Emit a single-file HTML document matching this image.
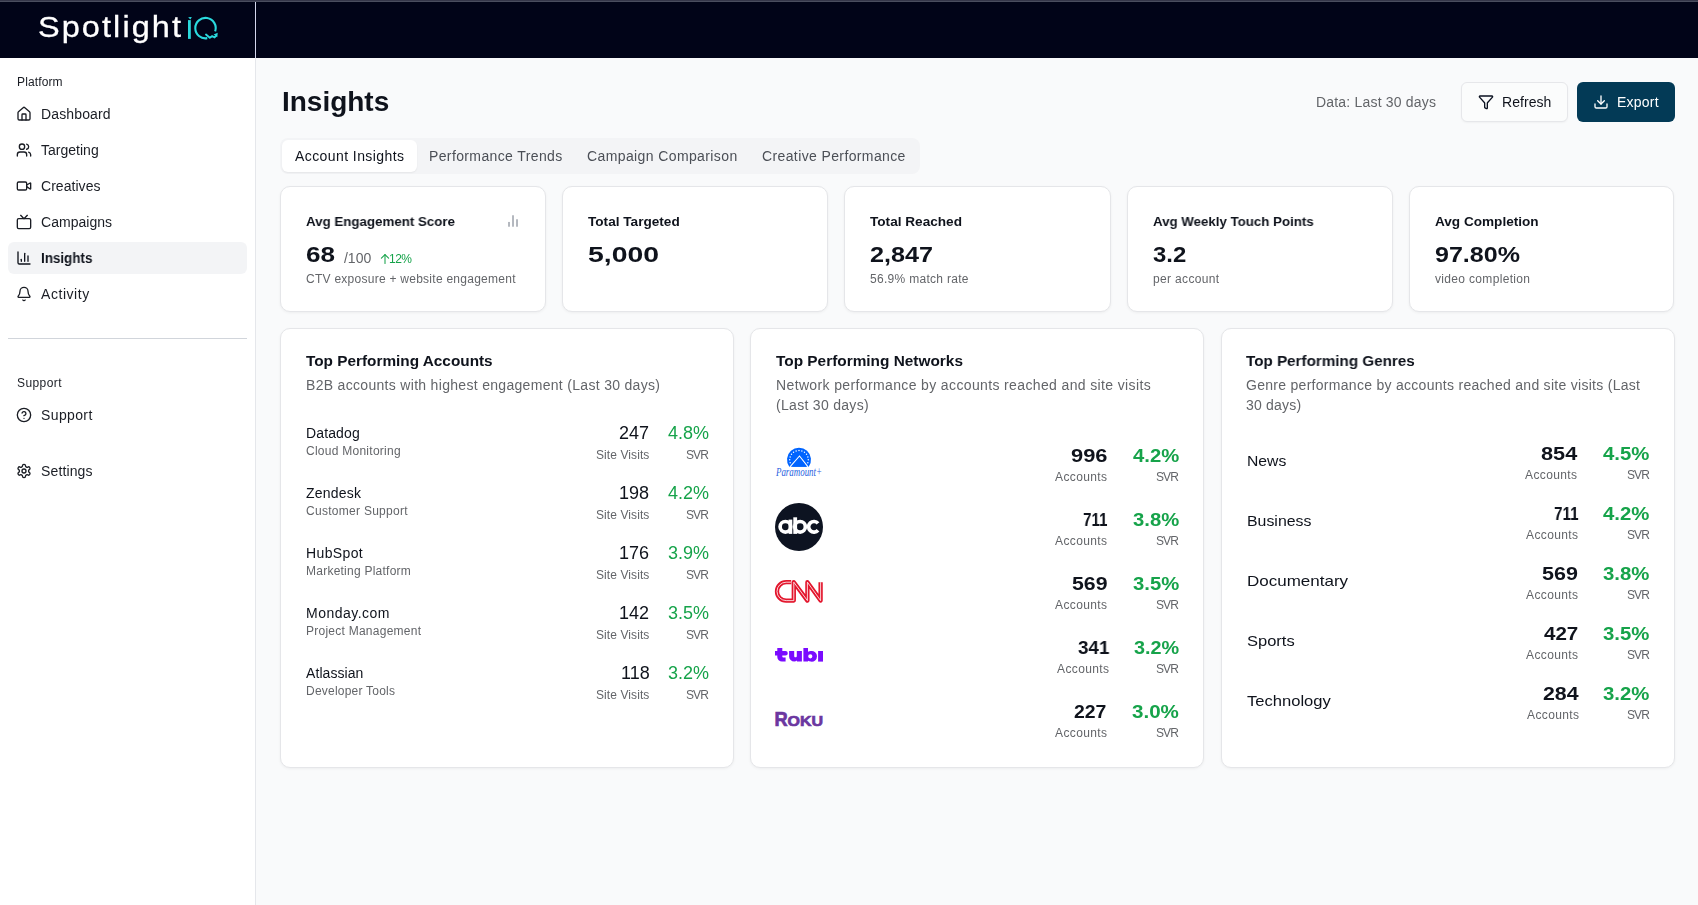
<!DOCTYPE html>
<html><head><meta charset="utf-8">
<style>
*{box-sizing:border-box;margin:0;padding:0}
html,body{width:1698px;height:905px;overflow:hidden;background:#f9fafb;font-family:"Liberation Sans",sans-serif;color:#111827;position:relative}
.t{position:absolute;white-space:nowrap;will-change:transform}
.b{position:absolute}
svg{position:absolute;overflow:visible}
</style></head>
<body>
<div class="b" style="left:0px;top:0px;width:1698px;height:1px;background:#35374a"></div>
<div class="b" style="left:0px;top:1px;width:1698px;height:1px;background:#4a4e5f"></div>
<div class="b" style="left:0px;top:2px;width:1698px;height:56px;background:#010418"></div>
<div class="b" style="left:255px;top:2px;width:1px;height:56px;background:#d3d6ec"></div>
<div class="b" style="left:0px;top:58px;width:255px;height:847px;background:#fff"></div>
<div class="b" style="left:255px;top:58px;width:1px;height:847px;background:#e5e7eb"></div>
<div class="t" style="left:37.50px;top:12.43px;font-size:29.5px;line-height:29.5px;color:#ffffff;letter-spacing:1.900px;-webkit-text-stroke:0.3px #fff;transform:scaleX(1.1);transform-origin:0 0;">Spotlight</div>
<svg style="left:186px;top:15px" width="36" height="28" viewBox="0 0 36 28">
<path d="M5.8 1.9 L2.1 2.3 L4.4 4.5 Z" fill="#2ad9dd"/>
<rect x="2.0" y="5.1" width="2.8" height="18.8" fill="#2ad9dd"/>
<path d="M 21.27 23.15 A 10.2 10.2 0 1 1 29.14 16.42" fill="none" stroke="#2ad9dd" stroke-width="2.1"/>
<path d="M 20.0 19.6 L 23.8 22.8 L 26.2 21.1 L 28.6 22.5 L 30.2 20.6" fill="none" stroke="#2ad9dd" stroke-width="1.9" stroke-linejoin="round" stroke-linecap="round"/>
<path d="M 31.7 17.8 L 27.6 19.5 L 31.3 22.2 Z" fill="#2ad9dd"/>
</svg>
<div class="t" style="left:16.60px;top:75.74px;font-size:12px;line-height:12px;color:#1a1d24;letter-spacing:0.131px;">Platform</div>
<div class="b" style="left:8px;top:242px;width:239px;height:32px;background:#f3f4f6;border-radius:6px"></div>
<div class="t" style="left:40.60px;top:107.35px;font-size:14px;line-height:14px;color:#1a1d24;letter-spacing:0.139px;">Dashboard</div>
<svg style="left:16px;top:106px" width="16" height="16" viewBox="0 0 24 24" fill="none" stroke="#1a1d24" stroke-width="2" stroke-linecap="round" stroke-linejoin="round"><path d="M15 21v-8a1 1 0 0 0-1-1h-4a1 1 0 0 0-1 1v8"/><path d="M3 10a2 2 0 0 1 .709-1.528l7-5.999a2 2 0 0 1 2.582 0l7 5.999A2 2 0 0 1 21 10v9a2 2 0 0 1-2 2H5a2 2 0 0 1-2-2z"/></svg>
<div class="t" style="left:40.60px;top:143.35px;font-size:14px;line-height:14px;color:#1a1d24;letter-spacing:0.013px;">Targeting</div>
<svg style="left:16px;top:142px" width="16" height="16" viewBox="0 0 24 24" fill="none" stroke="#1a1d24" stroke-width="2" stroke-linecap="round" stroke-linejoin="round"><path d="M16 21v-2a4 4 0 0 0-4-4H6a4 4 0 0 0-4 4v2"/><circle cx="9" cy="7" r="4"/><path d="M22 21v-2a4 4 0 0 0-3-3.87"/><path d="M16 3.13a4 4 0 0 1 0 7.75"/></svg>
<div class="t" style="left:40.60px;top:179.35px;font-size:14px;line-height:14px;color:#1a1d24;letter-spacing:0.046px;">Creatives</div>
<svg style="left:16px;top:178px" width="16" height="16" viewBox="0 0 24 24" fill="none" stroke="#1a1d24" stroke-width="2" stroke-linecap="round" stroke-linejoin="round"><path d="m16 13 5.223 3.482a.5.5 0 0 0 .777-.416V7.87a.5.5 0 0 0-.752-.432L16 10.5"/><rect x="2" y="6" width="14" height="12" rx="2"/></svg>
<div class="t" style="left:40.60px;top:215.35px;font-size:14px;line-height:14px;color:#1a1d24;letter-spacing:0.036px;">Campaigns</div>
<svg style="left:16px;top:214px" width="16" height="16" viewBox="0 0 24 24" fill="none" stroke="#1a1d24" stroke-width="2" stroke-linecap="round" stroke-linejoin="round"><rect width="20" height="15" x="2" y="7" rx="2" ry="2"/><polyline points="17 2 12 7 7 2"/></svg>
<div class="t" style="left:40.60px;top:251.35px;font-size:14px;line-height:14px;color:#0f131c;font-weight:bold;transform:scaleX(0.9559);transform-origin:0 0;">Insights</div>
<svg style="left:16px;top:250px" width="16" height="16" viewBox="0 0 24 24" fill="none" stroke="#0f131c" stroke-width="2" stroke-linecap="round" stroke-linejoin="round"><path d="M3 3v16a2 2 0 0 0 2 2h16"/><path d="M18 17V9"/><path d="M13 17V5"/><path d="M8 17v-3"/></svg>
<div class="t" style="left:40.60px;top:287.35px;font-size:14px;line-height:14px;color:#1a1d24;letter-spacing:0.552px;">Activity</div>
<svg style="left:16px;top:286px" width="16" height="16" viewBox="0 0 24 24" fill="none" stroke="#1a1d24" stroke-width="2" stroke-linecap="round" stroke-linejoin="round"><path d="M10.268 21a2 2 0 0 0 3.464 0"/><path d="M3.262 15.326A1 1 0 0 0 4 17h16a1 1 0 0 0 .74-1.673C19.41 13.956 18 12.499 18 8A6 6 0 0 0 6 8c0 4.499-1.411 5.956-2.738 7.326"/></svg>
<div class="b" style="left:8px;top:338px;width:239px;height:1px;background:#d1d5db"></div>
<div class="t" style="left:16.60px;top:376.84px;font-size:12px;line-height:12px;color:#1a1d24;letter-spacing:0.412px;">Support</div>
<div class="t" style="left:40.60px;top:407.75px;font-size:14px;line-height:14px;color:#1a1d24;letter-spacing:0.378px;">Support</div>
<svg style="left:16px;top:407px" width="16" height="16" viewBox="0 0 24 24" fill="none" stroke="#1a1d24" stroke-width="2" stroke-linecap="round" stroke-linejoin="round"><circle cx="12" cy="12" r="10"/><path d="M9.09 9a3 3 0 0 1 5.83 1c0 2-3 3-3 3"/><path d="M12 17h.01"/></svg>
<div class="t" style="left:40.60px;top:463.85px;font-size:14px;line-height:14px;color:#1a1d24;letter-spacing:0.131px;">Settings</div>
<svg style="left:16px;top:463px" width="16" height="16" viewBox="0 0 24 24" fill="none" stroke="#1a1d24" stroke-width="2" stroke-linecap="round" stroke-linejoin="round"><path d="M12.22 2h-.44a2 2 0 0 0-2 2v.18a2 2 0 0 1-1 1.73l-.43.25a2 2 0 0 1-2 0l-.15-.08a2 2 0 0 0-2.73.73l-.22.38a2 2 0 0 0 .73 2.73l.15.1a2 2 0 0 1 1 1.72v.51a2 2 0 0 1-1 1.74l-.15.09a2 2 0 0 0-.73 2.73l.22.38a2 2 0 0 0 2.73.73l.15-.08a2 2 0 0 1 2 0l.43.25a2 2 0 0 1 1 1.73V20a2 2 0 0 0 2 2h.44a2 2 0 0 0 2-2v-.18a2 2 0 0 1 1-1.73l.43-.25a2 2 0 0 1 2 0l.15.08a2 2 0 0 0 2.73-.73l.22-.39a2 2 0 0 0-.73-2.73l-.15-.08a2 2 0 0 1-1-1.74v-.5a2 2 0 0 1 1-1.74l.15-.09a2 2 0 0 0 .73-2.73l-.22-.38a2 2 0 0 0-2.73-.73l-.15.08a2 2 0 0 1-2 0l-.43-.25a2 2 0 0 1-1-1.73V4a2 2 0 0 0-2-2z"/><circle cx="12" cy="12" r="3"/></svg>
<div class="t" style="left:281.80px;top:88.30px;font-size:28px;line-height:28px;color:#0f131c;font-weight:bold;letter-spacing:-0.020px;">Insights</div>
<div class="t" style="left:1316.00px;top:95.25px;font-size:14px;line-height:14px;color:#636569;letter-spacing:0.192px;">Data: Last 30 days</div>
<div class="b" style="left:1461px;top:82px;width:107px;height:40px;background:#fbfcfc;border:1px solid #e6e7ea;border-radius:6px;box-shadow:0 1px 2px rgba(0,0,0,0.04)"></div>
<svg style="left:1478px;top:94px" width="16" height="16" viewBox="0 0 24 24" fill="none" stroke="#0b1120" stroke-width="2" stroke-linecap="round" stroke-linejoin="round"><path d="M10 20a1 1 0 0 0 .553.895l2 1A1 1 0 0 0 14 21v-7a2 2 0 0 1 .517-1.341L21.74 4.67A1 1 0 0 0 21 3H3a1 1 0 0 0-.742 1.67l7.225 7.989A2 2 0 0 1 10 14z"/></svg>
<div class="t" style="left:1502.00px;top:95.25px;font-size:14px;line-height:14px;color:#0f131c;letter-spacing:0.047px;">Refresh</div>
<div class="b" style="left:1577px;top:82px;width:98px;height:40px;background:#033a56;border-radius:6px"></div>
<svg style="left:1593px;top:94px" width="16" height="16" viewBox="0 0 24 24" fill="none" stroke="#ffffff" stroke-width="2" stroke-linecap="round" stroke-linejoin="round"><path d="M12 15V3"/><path d="M21 15v4a2 2 0 0 1-2 2H5a2 2 0 0 1-2-2v-4"/><path d="m7 10 5 5 5-5"/></svg>
<div class="t" style="left:1617.00px;top:95.25px;font-size:14px;line-height:14px;color:#ffffff;letter-spacing:0.228px;">Export</div>
<div class="b" style="left:280px;top:138px;width:640px;height:36px;background:#f3f4f6;border-radius:8px"></div>
<div class="b" style="left:282px;top:140px;width:135px;height:32px;background:#fff;border-radius:6px;box-shadow:0 1px 2px rgba(0,0,0,0.06)"></div>
<div class="t" style="left:294.70px;top:149.15px;font-size:14px;line-height:14px;color:#0f131c;letter-spacing:0.419px;">Account Insights</div>
<div class="t" style="left:429.00px;top:149.15px;font-size:14px;line-height:14px;color:#4b4f56;letter-spacing:0.375px;">Performance Trends</div>
<div class="t" style="left:587.20px;top:149.15px;font-size:14px;line-height:14px;color:#4b4f56;letter-spacing:0.390px;">Campaign Comparison</div>
<div class="t" style="left:762.40px;top:149.15px;font-size:14px;line-height:14px;color:#4b4f56;letter-spacing:0.381px;">Creative Performance</div>
<div class="b" style="left:280px;top:186px;width:266px;height:125.5px;background:#fff;border:1px solid #e5e6e9;border-radius:10px;box-shadow:0 1px 3px rgba(0,0,0,0.05)"></div>
<div class="t" style="left:305.60px;top:214.67px;font-size:13.5px;line-height:13.5px;color:#0f131c;font-weight:bold;transform:scaleX(0.9865);transform-origin:0 0;">Avg Engagement Score</div>
<div class="t" style="left:305.60px;top:243.68px;font-size:22px;line-height:22px;color:#0f131c;font-weight:bold;transform:scaleX(1.1850);transform-origin:0 0;">68</div>
<div class="t" style="left:305.60px;top:272.94px;font-size:12px;line-height:12px;color:#636569;letter-spacing:0.262px;">CTV exposure + website engagement</div>
<div class="b" style="left:562px;top:186px;width:266px;height:125.5px;background:#fff;border:1px solid #e5e6e9;border-radius:10px;box-shadow:0 1px 3px rgba(0,0,0,0.05)"></div>
<div class="t" style="left:587.60px;top:214.67px;font-size:13.5px;line-height:13.5px;color:#0f131c;font-weight:bold;transform:scaleX(1.0076);transform-origin:0 0;">Total Targeted</div>
<div class="t" style="left:587.60px;top:243.68px;font-size:22px;line-height:22px;color:#0f131c;font-weight:bold;transform:scaleX(1.2896);transform-origin:0 0;">5,000</div>
<div class="b" style="left:844px;top:186px;width:267px;height:125.5px;background:#fff;border:1px solid #e5e6e9;border-radius:10px;box-shadow:0 1px 3px rgba(0,0,0,0.05)"></div>
<div class="t" style="left:869.60px;top:214.67px;font-size:13.5px;line-height:13.5px;color:#0f131c;font-weight:bold;transform:scaleX(1.0080);transform-origin:0 0;">Total Reached</div>
<div class="t" style="left:869.60px;top:243.68px;font-size:22px;line-height:22px;color:#0f131c;font-weight:bold;transform:scaleX(1.1443);transform-origin:0 0;">2,847</div>
<div class="t" style="left:869.60px;top:272.94px;font-size:12px;line-height:12px;color:#636569;letter-spacing:0.297px;">56.9% match rate</div>
<div class="b" style="left:1127px;top:186px;width:266px;height:125.5px;background:#fff;border:1px solid #e5e6e9;border-radius:10px;box-shadow:0 1px 3px rgba(0,0,0,0.05)"></div>
<div class="t" style="left:1152.60px;top:214.67px;font-size:13.5px;line-height:13.5px;color:#0f131c;font-weight:bold;transform:scaleX(0.9842);transform-origin:0 0;">Avg Weekly Touch Points</div>
<div class="t" style="left:1152.60px;top:243.68px;font-size:22px;line-height:22px;color:#0f131c;font-weight:bold;transform:scaleX(1.0855);transform-origin:0 0;">3.2</div>
<div class="t" style="left:1152.60px;top:272.94px;font-size:12px;line-height:12px;color:#636569;letter-spacing:0.349px;">per account</div>
<div class="b" style="left:1409px;top:186px;width:265px;height:125.5px;background:#fff;border:1px solid #e5e6e9;border-radius:10px;box-shadow:0 1px 3px rgba(0,0,0,0.05)"></div>
<div class="t" style="left:1434.60px;top:214.67px;font-size:13.5px;line-height:13.5px;color:#0f131c;font-weight:bold;transform:scaleX(1.0059);transform-origin:0 0;">Avg Completion</div>
<div class="t" style="left:1434.60px;top:243.68px;font-size:22px;line-height:22px;color:#0f131c;font-weight:bold;transform:scaleX(1.1391);transform-origin:0 0;">97.80%</div>
<div class="t" style="left:1434.60px;top:272.94px;font-size:12px;line-height:12px;color:#636569;letter-spacing:0.330px;">video completion</div>
<div class="t" style="left:343.50px;top:250.65px;font-size:14px;line-height:14px;color:#636569;letter-spacing:-0.016px;">/100</div>
<svg style="left:379.5px;top:252.6px" width="10" height="12" viewBox="0 0 10 12" fill="none" stroke="#16a34a" stroke-width="1.05" stroke-linecap="round" stroke-linejoin="round"><path d="M5 10.5V1.6"/><path d="M1.4 5.2 L5 1.6 L8.6 5.2"/></svg>
<div class="t" style="left:389.00px;top:252.84px;font-size:12px;line-height:12px;color:#16a34a;letter-spacing:-0.509px;">12%</div>
<svg style="left:505px;top:213px" width="16" height="16" viewBox="0 0 24 24" fill="none" stroke="#6b7280" stroke-width="1.5" stroke-linecap="round" stroke-linejoin="round"><path d="M18 20V10"/><path d="M12 20V4"/><path d="M6 20v-6"/></svg>
<div class="b" style="left:280px;top:328px;width:454.1px;height:440px;background:#fff;border:1px solid #e5e6e9;border-radius:10px;box-shadow:0 1px 3px rgba(0,0,0,0.05)"></div>
<div class="b" style="left:750.4px;top:328px;width:454.1px;height:440px;background:#fff;border:1px solid #e5e6e9;border-radius:10px;box-shadow:0 1px 3px rgba(0,0,0,0.05)"></div>
<div class="b" style="left:1220.8px;top:328px;width:454.1px;height:440px;background:#fff;border:1px solid #e5e6e9;border-radius:10px;box-shadow:0 1px 3px rgba(0,0,0,0.05)"></div>
<div class="t" style="left:305.60px;top:352.95px;font-size:15.3px;line-height:15.3px;color:#0f131c;font-weight:bold;transform:scaleX(1.0029);transform-origin:0 0;">Top Performing Accounts</div>
<div class="t" style="left:305.60px;top:378.15px;font-size:14px;line-height:14px;color:#636569;letter-spacing:0.309px;">B2B accounts with highest engagement (Last 30 days)</div>
<div class="t" style="left:776.00px;top:352.95px;font-size:15.3px;line-height:15.3px;color:#0f131c;font-weight:bold;transform:scaleX(1.0060);transform-origin:0 0;">Top Performing Networks</div>
<div class="t" style="left:776.00px;top:378.15px;font-size:14px;line-height:14px;color:#636569;letter-spacing:0.368px;">Network performance by accounts reached and site visits</div>
<div class="t" style="left:776.00px;top:398.15px;font-size:14px;line-height:14px;color:#636569;letter-spacing:0.299px;">(Last 30 days)</div>
<div class="t" style="left:1246.40px;top:352.95px;font-size:15.3px;line-height:15.3px;color:#0f131c;font-weight:bold;transform:scaleX(0.9939);transform-origin:0 0;">Top Performing Genres</div>
<div class="t" style="left:1246.40px;top:378.15px;font-size:14px;line-height:14px;color:#636569;letter-spacing:0.286px;">Genre performance by accounts reached and site visits (Last</div>
<div class="t" style="left:1246.40px;top:398.15px;font-size:14px;line-height:14px;color:#636569;letter-spacing:0.215px;">30 days)</div>
<div class="t" style="left:305.60px;top:426.15px;font-size:14px;line-height:14px;color:#0f131c;letter-spacing:0.128px;">Datadog</div>
<div class="t" style="left:305.60px;top:444.64px;font-size:12px;line-height:12px;color:#636569;letter-spacing:0.259px;">Cloud Monitoring</div>
<div class="t" style="left:619.47px;top:423.76px;font-size:18px;line-height:18px;color:#0f131c;">247</div>
<div class="t" style="left:667.77px;top:423.76px;font-size:18px;line-height:18px;color:#16a34a;">4.8%</div>
<div class="t" style="left:596.20px;top:448.64px;font-size:12px;line-height:12px;color:#636569;letter-spacing:0.083px;">Site Visits</div>
<div class="t" style="left:686.00px;top:448.64px;font-size:12px;line-height:12px;color:#636569;letter-spacing:-0.938px;">SVR</div>
<div class="t" style="left:305.60px;top:486.15px;font-size:14px;line-height:14px;color:#0f131c;letter-spacing:0.217px;">Zendesk</div>
<div class="t" style="left:305.60px;top:504.64px;font-size:12px;line-height:12px;color:#636569;letter-spacing:0.281px;">Customer Support</div>
<div class="t" style="left:619.47px;top:483.76px;font-size:18px;line-height:18px;color:#0f131c;">198</div>
<div class="t" style="left:667.77px;top:483.76px;font-size:18px;line-height:18px;color:#16a34a;">4.2%</div>
<div class="t" style="left:596.20px;top:508.64px;font-size:12px;line-height:12px;color:#636569;letter-spacing:0.083px;">Site Visits</div>
<div class="t" style="left:686.00px;top:508.64px;font-size:12px;line-height:12px;color:#636569;letter-spacing:-0.938px;">SVR</div>
<div class="t" style="left:305.60px;top:546.15px;font-size:14px;line-height:14px;color:#0f131c;letter-spacing:0.370px;">HubSpot</div>
<div class="t" style="left:305.60px;top:564.64px;font-size:12px;line-height:12px;color:#636569;letter-spacing:0.241px;">Marketing Platform</div>
<div class="t" style="left:619.47px;top:543.76px;font-size:18px;line-height:18px;color:#0f131c;">176</div>
<div class="t" style="left:667.77px;top:543.76px;font-size:18px;line-height:18px;color:#16a34a;">3.9%</div>
<div class="t" style="left:596.20px;top:568.64px;font-size:12px;line-height:12px;color:#636569;letter-spacing:0.083px;">Site Visits</div>
<div class="t" style="left:686.00px;top:568.64px;font-size:12px;line-height:12px;color:#636569;letter-spacing:-0.938px;">SVR</div>
<div class="t" style="left:305.60px;top:606.15px;font-size:14px;line-height:14px;color:#0f131c;letter-spacing:0.477px;">Monday.com</div>
<div class="t" style="left:305.60px;top:624.64px;font-size:12px;line-height:12px;color:#636569;letter-spacing:0.251px;">Project Management</div>
<div class="t" style="left:619.47px;top:603.76px;font-size:18px;line-height:18px;color:#0f131c;">142</div>
<div class="t" style="left:667.77px;top:603.76px;font-size:18px;line-height:18px;color:#16a34a;">3.5%</div>
<div class="t" style="left:596.20px;top:628.64px;font-size:12px;line-height:12px;color:#636569;letter-spacing:0.083px;">Site Visits</div>
<div class="t" style="left:686.00px;top:628.64px;font-size:12px;line-height:12px;color:#636569;letter-spacing:-0.938px;">SVR</div>
<div class="t" style="left:305.60px;top:666.15px;font-size:14px;line-height:14px;color:#0f131c;letter-spacing:0.074px;">Atlassian</div>
<div class="t" style="left:305.60px;top:684.64px;font-size:12px;line-height:12px;color:#636569;letter-spacing:0.227px;">Developer Tools</div>
<div class="t" style="left:620.80px;top:663.76px;font-size:18px;line-height:18px;color:#0f131c;">118</div>
<div class="t" style="left:667.77px;top:663.76px;font-size:18px;line-height:18px;color:#16a34a;">3.2%</div>
<div class="t" style="left:596.20px;top:688.64px;font-size:12px;line-height:12px;color:#636569;letter-spacing:0.083px;">Site Visits</div>
<div class="t" style="left:686.00px;top:688.64px;font-size:12px;line-height:12px;color:#636569;letter-spacing:-0.938px;">SVR</div>
<div class="t" style="left:1070.90px;top:445.92px;font-size:19px;line-height:19px;color:#0f131c;font-weight:bold;transform:scaleX(1.1514);transform-origin:0 0;">996</div>
<div class="t" style="left:1132.80px;top:445.92px;font-size:19px;line-height:19px;color:#16a34a;font-weight:bold;transform:scaleX(1.0668);transform-origin:0 0;">4.2%</div>
<div class="t" style="left:1055.40px;top:470.54px;font-size:12px;line-height:12px;color:#636569;letter-spacing:0.377px;">Accounts</div>
<div class="t" style="left:1156.20px;top:470.54px;font-size:12px;line-height:12px;color:#636569;letter-spacing:-0.938px;">SVR</div>
<svg style="left:775px;top:448px" width="48" height="30" viewBox="0 0 48 30">
<path d="M 2.30 18.8 A 12 12 0 1 1 45.70 18.8 Z" fill="none"/>
<path d="M 2.3 18.8 A 12 12 0 1 1 21.7 18.8 Z" transform="translate(12,0)" fill="#0064ff"/>
<g transform="translate(12,0)"><circle cx="3.16" cy="14.67" r="0.72" fill="#fff"/><circle cx="2.70" cy="11.80" r="0.72" fill="#fff"/><circle cx="3.16" cy="8.93" r="0.72" fill="#fff"/><circle cx="4.48" cy="6.33" r="0.72" fill="#fff"/><circle cx="6.53" cy="4.28" r="0.72" fill="#fff"/><circle cx="9.13" cy="2.96" r="0.72" fill="#fff"/><circle cx="12.00" cy="2.50" r="0.72" fill="#fff"/><circle cx="14.87" cy="2.96" r="0.72" fill="#fff"/><circle cx="17.47" cy="4.28" r="0.72" fill="#fff"/><circle cx="19.52" cy="6.33" r="0.72" fill="#fff"/><circle cx="20.84" cy="8.93" r="0.72" fill="#fff"/><circle cx="21.30" cy="11.80" r="0.72" fill="#fff"/><circle cx="20.84" cy="14.67" r="0.72" fill="#fff"/>
<path d="M 3 18.8 L 12.5 8 L 21 18.8" fill="none" stroke="#fff" stroke-width="1.1"/>
<path d="M 12.5 9.8 L 19.5 18.8 L 5 18.8 Z" fill="#0064ff"/>
</g>
<text x="24" y="28.2" text-anchor="middle" font-family="Liberation Serif" font-style="italic" font-size="11.5" fill="#1f5fe0" textLength="46" lengthAdjust="spacingAndGlyphs">Paramount+</text>
</svg>
<div class="t" style="left:1082.80px;top:509.92px;font-size:19px;line-height:19px;color:#0f131c;font-weight:bold;transform:scaleX(0.8025);transform-origin:0 0;">711</div>
<div class="t" style="left:1132.80px;top:509.92px;font-size:19px;line-height:19px;color:#16a34a;font-weight:bold;transform:scaleX(1.0668);transform-origin:0 0;">3.8%</div>
<div class="t" style="left:1055.40px;top:534.54px;font-size:12px;line-height:12px;color:#636569;letter-spacing:0.377px;">Accounts</div>
<div class="t" style="left:1156.20px;top:534.54px;font-size:12px;line-height:12px;color:#636569;letter-spacing:-0.938px;">SVR</div>
<svg style="left:775px;top:503px" width="48" height="48" viewBox="0 0 48 48">
<circle cx="24" cy="24" r="24" fill="#0d1321"/>
<g fill="none" stroke="#fff" stroke-width="3.7">
<circle cx="10.4" cy="23.8" r="5.3"/>
<circle cx="25.1" cy="23.8" r="5.3"/>
<path d="M 43 20.4 A 5.3 5.3 0 1 0 43 27.2"/>
</g>
<rect x="13.6" y="16.6" width="3.7" height="14.3" fill="#fff"/>
<rect x="18.3" y="14.3" width="3.8" height="16.6" fill="#fff"/>
</svg>
<div class="t" style="left:1071.90px;top:573.92px;font-size:19px;line-height:19px;color:#0f131c;font-weight:bold;transform:scaleX(1.1198);transform-origin:0 0;">569</div>
<div class="t" style="left:1132.80px;top:573.92px;font-size:19px;line-height:19px;color:#16a34a;font-weight:bold;transform:scaleX(1.0668);transform-origin:0 0;">3.5%</div>
<div class="t" style="left:1055.40px;top:598.54px;font-size:12px;line-height:12px;color:#636569;letter-spacing:0.377px;">Accounts</div>
<div class="t" style="left:1156.20px;top:598.54px;font-size:12px;line-height:12px;color:#636569;letter-spacing:-0.938px;">SVR</div>
<svg style="left:775px;top:580px" width="48" height="23" viewBox="0 0 48 23">
<g fill="none" stroke-linejoin="round" stroke-linecap="butt">
<path d="M 16.2 2.2 H 11.2 A 9.2 9.2 0 0 0 11.2 20.6 H 18.8 V 2.2 L 32.4 20.6 V 2.2 L 45.6 20.6 V 2.2" stroke="#e3162d" stroke-width="4.3"/>
<path d="M 16.2 2.2 H 11.2 A 9.2 9.2 0 0 0 11.2 20.6 H 18.8 V 2.2 L 32.4 20.6 V 2.2 L 45.6 20.6 V 2.2" stroke="#fff" stroke-width="0.8"/>
</g>
</svg>
<div class="t" style="left:1077.70px;top:637.92px;font-size:19px;line-height:19px;color:#0f131c;font-weight:bold;transform:scaleX(0.9873);transform-origin:0 0;">341</div>
<div class="t" style="left:1133.80px;top:637.92px;font-size:19px;line-height:19px;color:#16a34a;font-weight:bold;transform:scaleX(1.0437);transform-origin:0 0;">3.2%</div>
<div class="t" style="left:1057.00px;top:662.54px;font-size:12px;line-height:12px;color:#636569;letter-spacing:0.377px;">Accounts</div>
<div class="t" style="left:1156.20px;top:662.54px;font-size:12px;line-height:12px;color:#636569;letter-spacing:-0.938px;">SVR</div>
<svg style="left:775px;top:648px" width="48" height="14" viewBox="0 0 48 14" fill="#7a0bff">
<path d="M2.3 0 H7.3 V3 H10.5 A2.3 2.3 0 0 1 10.5 7.6 H7.3 V8.6 A1 1 0 0 0 8.3 9.6 H10.6 V13.6 H7 A4.7 4.7 0 0 1 2.3 8.9 V7.6 H0 V3 H2.3 Z"/>
<path d="M14.1 3 H19.2 V8.4 A1.6 1.6 0 0 0 21.8 8.4 V3 H26.9 V13.6 H21.9 V12.6 A4 4 0 0 1 19.3 13.6 A5.2 5.2 0 0 1 14.1 8.4 Z"/>
<path d="M28.4 0 H33 V3.8 A5 5 0 0 1 35.8 3 A5.3 5.3 0 0 1 42 8.3 A5.3 5.3 0 0 1 35.8 13.6 A5 5 0 0 1 33 12.8 V13.6 H28.4 Z M35.3 6.2 A2.1 2.1 0 0 0 35.3 10.4 A2.1 2.1 0 0 0 35.3 6.2 Z" fill-rule="evenodd"/>
<rect x="43.1" y="3" width="4.9" height="10.6"/>
</svg>
<div class="t" style="left:1074.30px;top:701.92px;font-size:19px;line-height:19px;color:#0f131c;font-weight:bold;transform:scaleX(1.0220);transform-origin:0 0;">227</div>
<div class="t" style="left:1132.10px;top:701.92px;font-size:19px;line-height:19px;color:#16a34a;font-weight:bold;transform:scaleX(1.0830);transform-origin:0 0;">3.0%</div>
<div class="t" style="left:1054.70px;top:726.54px;font-size:12px;line-height:12px;color:#636569;letter-spacing:0.377px;">Accounts</div>
<div class="t" style="left:1156.20px;top:726.54px;font-size:12px;line-height:12px;color:#636569;letter-spacing:-0.938px;">SVR</div>
<svg style="left:775px;top:711px" width="48" height="16" viewBox="0 0 48 16">
<text x="-0.6" y="14.8" font-family="Liberation Sans" font-weight="bold" font-size="19.4" fill="#6b37a0" stroke="#6b37a0" stroke-width="0.7" textLength="13.2" lengthAdjust="spacingAndGlyphs">R</text>
<text x="12.6" y="14.8" font-family="Liberation Sans" font-weight="bold" font-size="15" fill="#6b37a0" stroke="#6b37a0" stroke-width="0.7" textLength="35.6" lengthAdjust="spacingAndGlyphs">OKU</text>
</svg>
<div class="t" style="left:1246.50px;top:453.10px;font-size:15px;line-height:15px;color:#0f131c;transform:scaleX(1.0478);transform-origin:0 0;">News</div>
<div class="t" style="left:1540.80px;top:443.62px;font-size:19px;line-height:19px;color:#0f131c;font-weight:bold;transform:scaleX(1.1419);transform-origin:0 0;">854</div>
<div class="t" style="left:1602.90px;top:443.62px;font-size:19px;line-height:19px;color:#16a34a;font-weight:bold;transform:scaleX(1.0714);transform-origin:0 0;">4.5%</div>
<div class="t" style="left:1525.00px;top:468.84px;font-size:12px;line-height:12px;color:#636569;letter-spacing:0.377px;">Accounts</div>
<div class="t" style="left:1626.50px;top:468.84px;font-size:12px;line-height:12px;color:#636569;letter-spacing:-0.938px;">SVR</div>
<div class="t" style="left:1246.50px;top:513.10px;font-size:15px;line-height:15px;color:#0f131c;transform:scaleX(1.0581);transform-origin:0 0;">Business</div>
<div class="t" style="left:1553.60px;top:503.62px;font-size:19px;line-height:19px;color:#0f131c;font-weight:bold;transform:scaleX(0.8058);transform-origin:0 0;">711</div>
<div class="t" style="left:1602.90px;top:503.62px;font-size:19px;line-height:19px;color:#16a34a;font-weight:bold;transform:scaleX(1.0714);transform-origin:0 0;">4.2%</div>
<div class="t" style="left:1526.30px;top:528.84px;font-size:12px;line-height:12px;color:#636569;letter-spacing:0.377px;">Accounts</div>
<div class="t" style="left:1626.50px;top:528.84px;font-size:12px;line-height:12px;color:#636569;letter-spacing:-0.938px;">SVR</div>
<div class="t" style="left:1246.50px;top:573.10px;font-size:15px;line-height:15px;color:#0f131c;transform:scaleX(1.1334);transform-origin:0 0;">Documentary</div>
<div class="t" style="left:1541.80px;top:563.62px;font-size:19px;line-height:19px;color:#0f131c;font-weight:bold;transform:scaleX(1.1324);transform-origin:0 0;">569</div>
<div class="t" style="left:1602.90px;top:563.62px;font-size:19px;line-height:19px;color:#16a34a;font-weight:bold;transform:scaleX(1.0714);transform-origin:0 0;">3.8%</div>
<div class="t" style="left:1525.70px;top:588.84px;font-size:12px;line-height:12px;color:#636569;letter-spacing:0.377px;">Accounts</div>
<div class="t" style="left:1626.50px;top:588.84px;font-size:12px;line-height:12px;color:#636569;letter-spacing:-0.938px;">SVR</div>
<div class="t" style="left:1246.50px;top:633.10px;font-size:15px;line-height:15px;color:#0f131c;transform:scaleX(1.1003);transform-origin:0 0;">Sports</div>
<div class="t" style="left:1544.00px;top:623.62px;font-size:19px;line-height:19px;color:#0f131c;font-weight:bold;transform:scaleX(1.0820);transform-origin:0 0;">427</div>
<div class="t" style="left:1602.90px;top:623.62px;font-size:19px;line-height:19px;color:#16a34a;font-weight:bold;transform:scaleX(1.0714);transform-origin:0 0;">3.5%</div>
<div class="t" style="left:1526.30px;top:648.84px;font-size:12px;line-height:12px;color:#636569;letter-spacing:0.377px;">Accounts</div>
<div class="t" style="left:1626.50px;top:648.84px;font-size:12px;line-height:12px;color:#636569;letter-spacing:-0.938px;">SVR</div>
<div class="t" style="left:1246.50px;top:693.10px;font-size:15px;line-height:15px;color:#0f131c;transform:scaleX(1.1043);transform-origin:0 0;">Technology</div>
<div class="t" style="left:1543.00px;top:683.62px;font-size:19px;line-height:19px;color:#0f131c;font-weight:bold;transform:scaleX(1.1230);transform-origin:0 0;">284</div>
<div class="t" style="left:1602.90px;top:683.62px;font-size:19px;line-height:19px;color:#16a34a;font-weight:bold;transform:scaleX(1.0714);transform-origin:0 0;">3.2%</div>
<div class="t" style="left:1526.60px;top:708.84px;font-size:12px;line-height:12px;color:#636569;letter-spacing:0.377px;">Accounts</div>
<div class="t" style="left:1626.50px;top:708.84px;font-size:12px;line-height:12px;color:#636569;letter-spacing:-0.938px;">SVR</div>
</body></html>
